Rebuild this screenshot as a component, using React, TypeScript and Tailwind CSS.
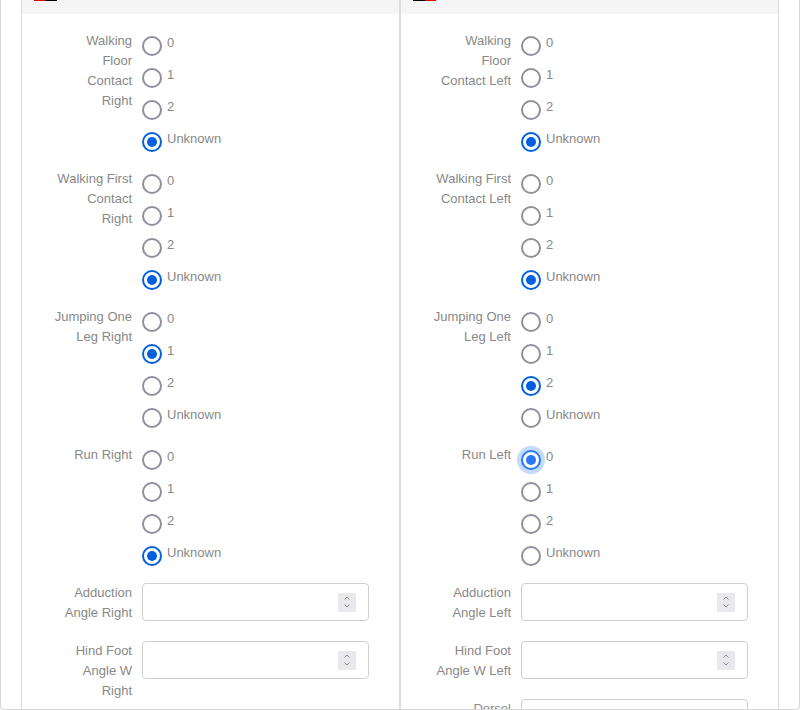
import React from 'react'

type Field =
  | { kind: 'radio'; label: string; value: string; focused?: boolean }
  | { kind: 'number'; label: string }

const options = ['0', '1', '2', 'Unknown']

const rightFields: Field[] = [
  { kind: 'radio', label: 'Walking Floor Contact Right', value: 'Unknown' },
  { kind: 'radio', label: 'Walking First Contact Right', value: 'Unknown' },
  { kind: 'radio', label: 'Jumping One Leg Right', value: '1' },
  { kind: 'radio', label: 'Run Right', value: 'Unknown' },
  { kind: 'number', label: 'Adduction Angle Right' },
  { kind: 'number', label: 'Hind Foot Angle W Right' },
  { kind: 'number', label: 'Dorsel Flexion Right' },
]

const leftFields: Field[] = [
  { kind: 'radio', label: 'Walking Floor Contact Left', value: 'Unknown' },
  { kind: 'radio', label: 'Walking First Contact Left', value: 'Unknown' },
  { kind: 'radio', label: 'Jumping One Leg Left', value: '2' },
  { kind: 'radio', label: 'Run Left', value: '0', focused: true },
  { kind: 'number', label: 'Adduction Angle Left' },
  { kind: 'number', label: 'Hind Foot Angle W Left' },
  { kind: 'number', label: 'Dorsel Flexion Left' },
]

function Radio({ checked, focused }: { checked: boolean; focused?: boolean }) {
  if (checked) {
    return (
      <span
        className={`mt-[5px] flex h-[20px] w-[20px] shrink-0 items-center justify-center rounded-full border-2 ${
          focused
            ? 'border-[#2a78f6] shadow-[0_0_0_4px_#c3dbff]'
            : 'border-[#0060df]'
        } bg-white`}
      >
        <span
          className={`h-[10px] w-[10px] rounded-full ${focused ? 'bg-[#2a78f6]' : 'bg-[#0060df]'}`}
        />
      </span>
    )
  }
  return (
    <span className="mt-[5px] h-[20px] w-[20px] shrink-0 rounded-full border-2 border-[#8f8f9d] bg-white" />
  )
}

function Spinner() {
  return (
    <span className="flex h-[19px] w-[18px] flex-col items-center justify-center bg-[#e9e9ed]">
      <svg width="8" height="14" viewBox="0 0 8 14" fill="none">
        <path d="M1.5 4.5 L4 2 L6.5 4.5" stroke="#8a8a8a" strokeWidth="1" />
        <path d="M1.5 9.5 L4 12 L6.5 9.5" stroke="#8a8a8a" strokeWidth="1" />
      </svg>
    </span>
  )
}

function Row({ field }: { field: Field }) {
  return (
    <div className="mb-[10px] flex">
      <div className="ml-[32px] w-[78px] shrink-0 text-right leading-[20px] text-[#888]">
        {field.label}
      </div>
      <div className="ml-[10px] flex-1">
        {field.kind === 'radio' ? (
          <div className="flex flex-col">
            {options.map((opt) => (
              <label key={opt} className="flex h-[32px] items-start gap-[5px]">
                <Radio checked={field.value === opt} focused={field.focused && field.value === opt} />
                <span className="mt-[2px] leading-[20px] text-[#888]">{opt}</span>
              </label>
            ))}
          </div>
        ) : (
          <div className="min-h-[48px]">
            <div className="flex h-[38px] w-[227px] items-center justify-end rounded-[4px] border border-[#cfcfcf] bg-white pr-[12px]">
              <Spinner />
            </div>
          </div>
        )}
      </div>
    </div>
  )
}

function Card({ fields, flag }: { fields: Field[]; flag: 'rb' | 'br' }) {
  return (
    <div className="flex-1 border-x border-[#dcdcdc] bg-white">
      <div className="h-[14px] bg-[#f5f5f5]">
        <div className="ml-[12px] flex">
          <span className={`h-[1px] w-[12px] ${flag === 'rb' ? 'bg-[#e00000]' : 'bg-black'}`} />
          <span className={`h-[1px] w-[11px] ${flag === 'rb' ? 'bg-black' : 'bg-[#e00000]'}`} />
        </div>
      </div>
      <div className="pt-[17px]">
        {fields.map((f) => (
          <Row key={f.label} field={f} />
        ))}
      </div>
    </div>
  )
}

export default function App() {
  return (
    <div
      className="h-[710px] w-[800px] overflow-hidden rounded-b-[4px] border-x border-b border-[#d6d6d6] bg-white text-[13px]"
      style={{ fontFamily: '"Liberation Sans", Arial, sans-serif' }}
    >
      <div className="flex px-[20px]">
        <Card fields={rightFields} flag="rb" />
        <Card fields={leftFields} flag="br" />
      </div>
    </div>
  )
}
